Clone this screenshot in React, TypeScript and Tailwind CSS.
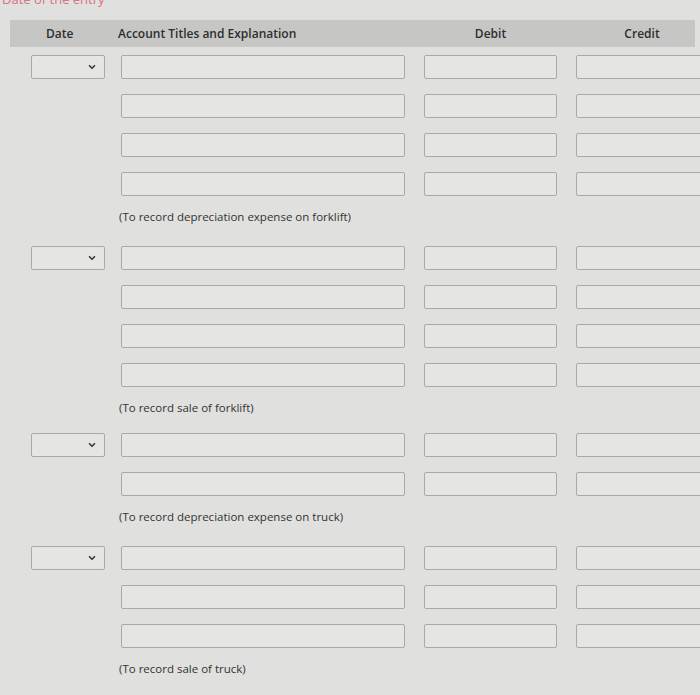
import { ChevronDown } from "lucide-react";

type Group = { rows: number; note: string; top: string };

const groups: Group[] = [
  { rows: 4, note: "(To record depreciation expense on forklift)", top: "" },
  { rows: 4, note: "(To record sale of forklift)", top: "pt-[21px]" },
  { rows: 2, note: "(To record depreciation expense on truck)", top: "pt-[17px]" },
  { rows: 3, note: "(To record sale of truck)", top: "pt-[21px]" },
];

function Box({ className = "" }: { className?: string }) {
  return (
    <div
      className={`h-6 shrink-0 rounded-[2px] border-[1.5px] border-[#a9a9a7] bg-[#e5e5e3] ${className}`}
    />
  );
}

function Row({ withDate }: { withDate: boolean }) {
  return (
    <div className="flex items-center">
      <div className="ml-[31px] w-[74px] shrink-0">
        {withDate && (
          <div className="flex h-6 items-center justify-end rounded-[2px] border-[1.5px] border-[#a9a9a7] bg-[#e5e5e3] pr-[7px]">
            <ChevronDown size={10} strokeWidth={4} className="text-[#3a3a3a]" />
          </div>
        )}
      </div>
      <Box className="ml-[16px] w-[284px]" />
      <Box className="ml-[19px] w-[133px]" />
      <Box className="ml-[19px] w-[132px]" />
    </div>
  );
}

export default function App() {
  return (
    <div
      className="h-[695px] w-[700px] overflow-hidden bg-[#e0e0de] text-[#333]"
      style={{ fontFamily: '"Open Sans", "Noto Sans", sans-serif' }}
    >
      {/* clipped heading from previous part */}
      <div className="h-[10px] overflow-hidden">
        <div className="-mt-[9px] pl-[2px] text-[13px] leading-[16px] text-[#d9737c]">
          Date of the entry
        </div>
      </div>

      {/* Table header */}
      <div className="ml-[10px] mt-[10px] flex h-[27px] w-[685px] items-center bg-[#c6c7c5] text-[12px] font-semibold text-[#2e2e2e]">
        <div className="ml-[36px] w-[30px] shrink-0">Date</div>
        <div className="ml-[42px] w-[290px] shrink-0">Account Titles and Explanation</div>
        <div className="ml-[16px] w-[133px] shrink-0 text-center">Debit</div>
        <div className="ml-[19px] w-[132px] shrink-0 text-center">Credit</div>
      </div>

      <div className="pt-[8px]">
        {groups.map((g, gi) => (
          <div key={gi} className={g.top}>
            <div className="flex flex-col gap-[15px]">
              {Array.from({ length: g.rows }).map((_, ri) => (
                <Row key={ri} withDate={ri === 0} />
              ))}
            </div>
            <div className="ml-[119px] mt-[13px] h-4 text-[11.5px] leading-4 text-[#333]">
              {g.note}
            </div>
          </div>
        ))}
      </div>
    </div>
  );
}
